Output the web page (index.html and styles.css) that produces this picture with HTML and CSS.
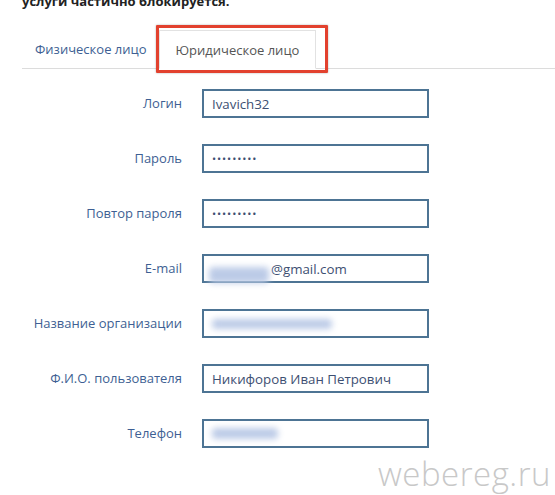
FILE: index.html
```html
<!DOCTYPE html>
<html lang="ru">
<head>
<meta charset="utf-8">
<link rel="stylesheet" href="styles.css">
</head>
<body>
<div class="page">
  <p class="notice">услуги частично блокируется.</p>
  <div class="tabs">
    <span class="tab">Физическое лицо</span>
    <span class="tab active">Юридическое лицо<span class="highlight"></span></span>
  </div>
  <div class="form">
    <label class="label">Логин</label>
    <div class="field"><span class="value">Ivavich32</span></div>
    <label class="label">Пароль</label>
    <div class="field"><span class="dots">•••••••••</span></div>
    <label class="label">Повтор пароля</label>
    <div class="field"><span class="dots">•••••••••</span></div>
    <label class="label">E-mail</label>
    <div class="field"><span class="blur blur-mail"></span><span class="value">@gmail.com</span></div>
    <label class="label">Название организации</label>
    <div class="field"><span class="blur blur-org"></span></div>
    <label class="label">Ф.И.О. пользователя</label>
    <div class="field"><span class="value">Никифоров Иван Петрович</span></div>
    <label class="label">Телефон</label>
    <div class="field"><span class="blur blur-tel"></span></div>
  </div>
  <div class="watermark">webereg.ru</div>
</div>
</body>
</html>
```
FILE: styles.css
```css
html, body {
  margin: 0;
  padding: 0;
  background: #fff;
}
.page {
  position: relative;
  width: 555px;
  height: 495px;
  overflow: hidden;
  font-family: "Open Sans", "Noto Sans", sans-serif;
}
.notice {
  margin: 0;
  padding-left: 22px;
  font-size: 13px;
  font-weight: bold;
  color: #222;
  line-height: 16px;
  margin-top: -7px;
  height: 9px;
  overflow: visible;
}
.tabs {
  margin: 28px 0 0 22px;
  height: 38px;
  border-bottom: 1px solid #dcdcdc;
  display: flex;
  align-items: flex-end;
}
.tab {
  font-size: 13px;
  color: #3e5f93;
  padding: 0 13px;
  height: 38px;
  line-height: 38px;
  box-sizing: border-box;
}
.tab.active {
  position: relative;
  color: #555;
  background: #fff;
  border: 1px solid #e2e2e2;
  border-bottom: 1px solid #fff;
  margin-bottom: -1px;
  height: 39px;
  line-height: 38px;
  padding: 0 16px 0 15px;
}
.highlight {
  position: absolute;
  left: -4px;
  top: -6px;
  width: 172px;
  height: 48px;
  border: 3px solid #e2412e;
  box-sizing: border-box;
  box-shadow: 0 0 2px rgba(0,0,0,0.35);
  border-radius: 1px;
}
.form {
  display: grid;
  grid-template-columns: 182px 227px;
  column-gap: 20px;
  row-gap: 26px;
  margin-top: 20px;
}
.label {
  text-align: right;
  font-size: 13px;
  color: #3e5f93;
  line-height: 29px;
  white-space: nowrap;
}
.field {
  position: relative;
  height: 29px;
  border: 2px solid #4d7494;
  box-sizing: border-box;
  padding-left: 8px;
  display: flex;
  align-items: center;
  font-size: 13.3px;
  color: #3d4f72;
}
.value {
  white-space: nowrap;
}
.dots {
  font-size: 11px;
  letter-spacing: 0.9px;
  color: #3d4f72;
}
.blur {
  display: inline-block;
  background: #bccbe7;
  filter: blur(3px);
  border-radius: 4px;
}
.blur-mail {
  width: 60px;
  height: 16px;
  margin-right: 2px;
  position: relative;
  top: 6px;
  margin-left: -3px;
}
.blur-org {
  width: 120px;
  height: 10px;
}
.blur-tel {
  width: 66px;
  height: 11px;
}
.watermark {
  position: absolute;
  left: 378px;
  top: 451px;
  font-family: "Open Sans", sans-serif;
  font-weight: 300;
  font-size: 33px;
  color: #c8c8c8;
  letter-spacing: 0.5px;
}
```
